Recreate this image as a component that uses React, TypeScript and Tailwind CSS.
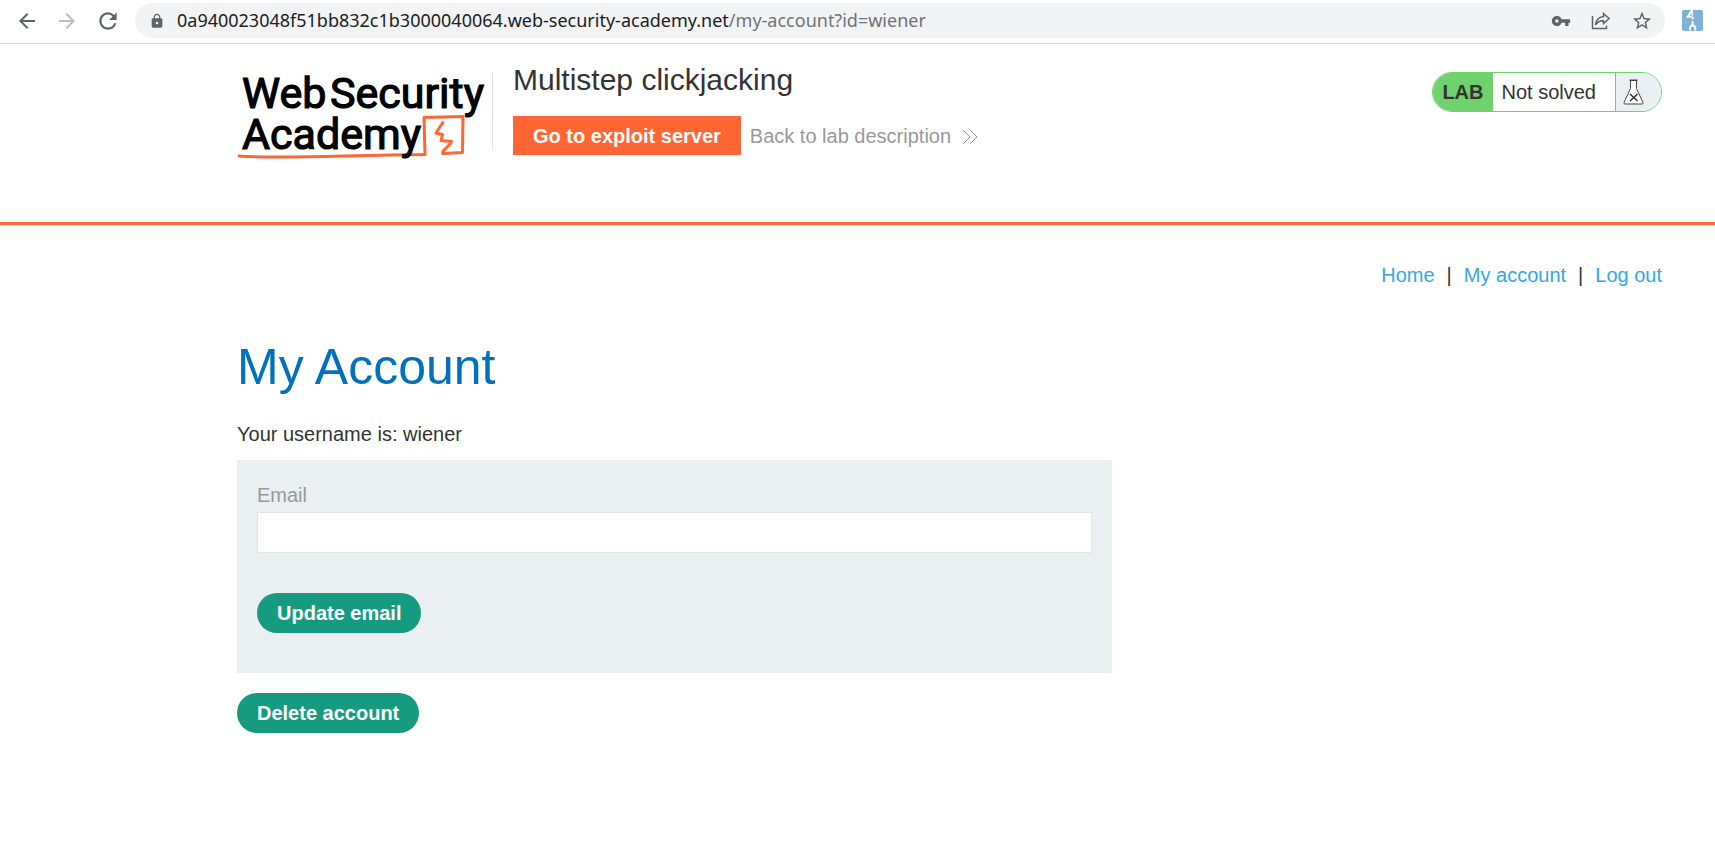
import { MdArrowBack, MdArrowForward, MdLock, MdRefresh, MdStarBorder, MdVpnKey } from "react-icons/md";

function ShareIcon() {
  return (
    <svg className="h-[18px] w-[20px]" viewBox="0 0 20 18" fill="none" stroke="#5f6368" strokeWidth="1.5" strokeLinejoin="miter">
      <path d="M1.5 4v12.5h14v-3" />
      <path d="M12.5 1.5l5.500 5-5.500 5V8.700C9 8.500 6.500 9.800 4.500 12.800c.5-4.500 3.500-7.800 8-8.300z" />
    </svg>
  );
}

function ExtensionIcon() {
  return (
    <svg className="h-[21px] w-[21px]" viewBox="0 0 21 21">
      <rect width="21" height="21" rx="2" fill="#7fb2d8" />
      <path d="M10 0L5.800 6.800h3.700" fill="none" stroke="#fff" strokeWidth="2" />
      <path d="M10.200 0v5.500M10.600 6.500v3M10.600 11v5" stroke="#fff" strokeWidth="1.800" />
      <path d="M8 20.500v-2.400a2.600 2.600 0 0 1 5.200 0v2.400" fill="none" stroke="#fff" strokeWidth="1.900" />
    </svg>
  );
}

function BrowserBar() {
  return (
    <div className="flex h-11 items-center border-b border-[#d9dbdb] bg-white pr-3 pb-[2px] text-[#5f6368]">
      <div className="flex shrink-0 items-center gap-4 pl-[15px]">
        <button type="button" aria-label="Back">
          <MdArrowBack className="h-6 w-6" />
        </button>
        <button type="button" aria-label="Forward" className="text-[#bcbec0]">
          <MdArrowForward className="h-6 w-6" />
        </button>
        <button type="button" aria-label="Reload">
          <MdRefresh className="h-[26px] w-[26px]" />
        </button>
      </div>
      <div className="ml-[14px] flex h-[35px] min-w-0 flex-1 items-center rounded-full bg-[#f1f3f4] pr-3 pl-[14px]">
        <MdLock className="h-4 w-4 shrink-0" />
        <div className="ml-3 min-w-0 flex-1 truncate pb-[2px] font-['Noto_Sans',sans-serif] text-[18px] leading-6 text-[#202124]">
          0a940023048f51bb832c1b3000040064.web-security-academy.net
          <span className="text-[#6f7377]">/my-account?id=wiener</span>
        </div>
        <div className="flex shrink-0 items-center gap-5">
          <button type="button" aria-label="Passwords">
            <MdVpnKey className="h-5 w-5" />
          </button>
          <button type="button" aria-label="Share">
            <ShareIcon />
          </button>
          <button type="button" aria-label="Bookmark">
            <MdStarBorder className="h-[22px] w-[22px]" />
          </button>
        </div>
      </div>
      <button type="button" aria-label="Extension" className="ml-[17px] shrink-0">
        <ExtensionIcon />
      </button>
    </div>
  );
}

function Logo() {
  return (
    <svg className="h-[90px] w-[250px] shrink-0" viewBox="0 0 250 90" role="img" aria-label="Web Security Academy">
      <path
        d="M1 84C45 87 110 83 188 82.500L187 45.500L226 44.500L225.500 80.500L206 81.500C204 79 213 74 214.500 69.500L204 68.500L205.500 62.500L199 61L206.500 49.500"
        fill="none"
        stroke="#ff6633"
        strokeWidth="3"
        strokeLinejoin="round"
      />
      <g className="font-['Roboto',sans-serif] text-[43px]" fill="#000" stroke="#000" strokeWidth="1.200">
        <text x="5" y="36">Web</text>
        <text x="93" y="36">Security</text>
        <text x="5" y="77">Academy</text>
      </g>
    </svg>
  );
}

function LabStatus() {
  return (
    <div className="flex h-10 shrink-0 overflow-hidden rounded-full border border-[#70d26d] text-[20px]">
      <span className="flex items-center bg-[#70d26d] px-[9px] font-bold">LAB</span>
      <span className="flex items-center pr-[19px] pl-[9px]">Not solved</span>
      <span className="flex w-[46px] items-center border-l border-[#70d26d] bg-[#eaeff2] pl-[7px]">
        <svg className="h-[26px] w-[21px]" viewBox="0 0 21 26">
          <path
            d="M7.500 1.500v8L1 23.500q-.3 1.500 1 1.500h17q1.300 0 1-1.500L13.500 9.500v-8"
            fill="#fff"
            stroke="#444"
            strokeWidth="1"
          />
          <path d="M6.500 1.200h8" stroke="#444" strokeWidth="1.500" />
          <path d="M7 15l7.500 7M14.500 15L7 22" stroke="#333" strokeWidth="1.600" />
        </svg>
      </span>
    </div>
  );
}

function LabHeader() {
  return (
    <header className="flex h-[181px] items-start border-b-[3px] border-[#ff6633] pt-7 pr-[53px] pl-[237px]">
      <Logo />
      <div className="ml-[5px] flex-1 border-l border-[#e2e5e8] pl-5">
        <div className="flex h-[78px] flex-col justify-between">
          <h2 className="-mt-3 text-[30px] leading-10">Multistep clickjacking</h2>
          <div className="-mb-[5px] flex items-center gap-[9px] text-[20px] leading-[23px]">
            <a href="#exploit" className="bg-[#ff6633] px-5 pt-[9px] pb-[7px] font-bold text-white">
              Go to exploit server
            </a>
            <a href="#lab" className="flex items-center gap-[11px] pt-[2px] text-[#999]">
              Back to lab description
              <svg className="h-4 w-4" viewBox="0 0 16 16" fill="none" stroke="#999" strokeWidth="1">
                <path d="M1 1l7 7-7 7M8 1l7 7-7 7" />
              </svg>
            </a>
          </div>
        </div>
      </div>
      <LabStatus />
    </header>
  );
}

const pill = "rounded-full bg-[#179b80] px-5 text-[20px] leading-10 font-bold text-white";

export default function App() {
  return (
    <div className="min-h-screen bg-white font-['Liberation_Sans',Arial,sans-serif] text-[20px] text-[#333332]">
      <BrowserBar />
      <LabHeader />
      <main className="pr-[53px] pl-[237px]">
        <nav className="flex justify-end gap-3 pt-[35px] leading-[30px] text-[#35a7e4]">
          <a href="#home">Home</a>
          <span className="text-[#333332]">|</span>
          <a href="#account">My account</a>
          <span className="text-[#333332]">|</span>
          <a href="#logout">Log out</a>
        </nav>
        <h1 className="pt-[47px] text-[50px] leading-[60px] text-[#0071bd]">My Account</h1>
        <p className="pt-[22px] leading-[30px]">Your username is: wiener</p>
        <form className="mt-[11px] w-full max-w-[875px] bg-[#eaeff2] px-5 pt-5 pb-10" onSubmit={(e) => e.preventDefault()}>
          <label htmlFor="email" className="block leading-[30px] text-[#999]">
            Email
          </label>
          <input
            id="email"
            type="email"
            className="mt-[2px] block h-[41px] w-full border border-[#e4e4e4] bg-white px-3 outline-none"
          />
          <button type="submit" className={`mt-10 block ${pill}`}>
            Update email
          </button>
        </form>
        <button type="button" className={`mt-5 block ${pill}`}>
          Delete account
        </button>
      </main>
    </div>
  );
}
